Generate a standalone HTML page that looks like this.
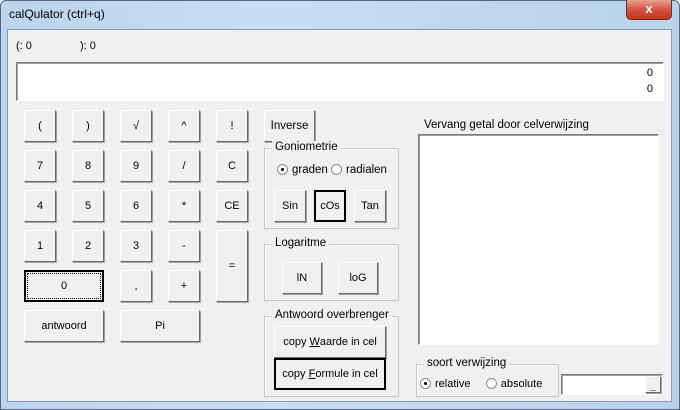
<!DOCTYPE html>
<html><head><meta charset="utf-8"><style>
*{box-sizing:border-box;margin:0;padding:0}
body{width:680px;height:410px;overflow:hidden;font-family:"Liberation Sans",sans-serif;font-size:11px;color:#000;background:#fff}
#win{position:absolute;left:0;top:0;width:680px;height:410px;background:linear-gradient(90deg,#bcd4ec,#c9def3 40%,#b9d1ea);border:1px solid #55687d;border-radius:6px 6px 0 0}
#title{position:absolute;left:9px;top:7px;font-size:12px}
#close{position:absolute;left:626px;top:0;width:46px;height:20px;border:1px solid #6b2a22;border-top:none;border-radius:0 0 5px 5px;background:linear-gradient(#e8a193,#d5553e 50%,#c2331c);color:#fff;font-weight:bold;font-size:13px;text-align:center;line-height:18px}
#client{position:absolute;left:7px;top:29px;width:665px;height:373px;background:#f0f0f0;border:1px solid #8a9bb0}
.a{position:absolute;white-space:nowrap}
.b{position:absolute;background:#f0f0f0;border:1px solid;border-color:#fff #696969 #696969 #fff;box-shadow:1px 1px 0 #a0a0a0;display:flex;align-items:center;justify-content:center;font-size:11px;white-space:nowrap}
.d{border:2px solid #000;box-shadow:none}
.g{position:absolute;border:1px solid #c8c8c8;box-shadow:inset 1px 1px 0 #fff}
.g>span{position:absolute;top:-8px;left:7px;background:#f0f0f0;padding:0 3px;font-size:11.5px;white-space:nowrap}
.w{position:absolute;background:#fff;border:1px solid;border-color:#7a7a7a #fff #fff #7a7a7a;box-shadow:inset 1px 1px 0 #a0a0a0}
.r{display:inline-block;width:11px;height:11px;border-radius:50%;border:1px solid #8a8a8a;background:#fff;vertical-align:-2px;position:relative;margin-right:4px}
.r.on::after{content:"";position:absolute;left:3px;top:3px;width:3px;height:3px;border-radius:50%;background:#000}
</style></head><body>
<div id="win"></div>
<div id="title">calQulator (ctrl+q)</div>
<div id="close">x</div>
<div id="client"></div>
<div class="a" style="left:16px;top:40px">(: 0</div>
<div class="a" style="left:80px;top:40px">): 0</div>
<div class="w" style="left:16px;top:62px;width:648px;height:39px"><div class="a" style="right:10px;top:4px">0</div><div class="a" style="right:10px;top:20px">0</div></div>

<div class="b" style="left:24px;top:110px;width:32px;height:32px">(</div>
<div class="b" style="left:72px;top:110px;width:32px;height:32px">)</div>
<div class="b" style="left:120px;top:110px;width:32px;height:32px">√</div>
<div class="b" style="left:168px;top:110px;width:32px;height:32px">^</div>
<div class="b" style="left:216px;top:110px;width:32px;height:32px">!</div>
<div class="b" style="left:24px;top:150px;width:32px;height:32px">7</div>
<div class="b" style="left:72px;top:150px;width:32px;height:32px">8</div>
<div class="b" style="left:120px;top:150px;width:32px;height:32px">9</div>
<div class="b" style="left:168px;top:150px;width:32px;height:32px">/</div>
<div class="b" style="left:216px;top:150px;width:32px;height:32px">C</div>
<div class="b" style="left:24px;top:190px;width:32px;height:32px">4</div>
<div class="b" style="left:72px;top:190px;width:32px;height:32px">5</div>
<div class="b" style="left:120px;top:190px;width:32px;height:32px">6</div>
<div class="b" style="left:168px;top:190px;width:32px;height:32px">*</div>
<div class="b" style="left:216px;top:190px;width:32px;height:32px">CE</div>
<div class="b" style="left:24px;top:230px;width:32px;height:32px">1</div>
<div class="b" style="left:72px;top:230px;width:32px;height:32px">2</div>
<div class="b" style="left:120px;top:230px;width:32px;height:32px">3</div>
<div class="b" style="left:168px;top:230px;width:32px;height:32px">-</div>
<div class="b" style="left:216px;top:230px;width:32px;height:72px">=</div>
<div class="b d" style="left:24px;top:270px;width:80px;height:32px"><span style="outline:1px dotted #000;width:72px;height:24px;display:flex;align-items:center;justify-content:center">0</span></div>
<div class="b" style="left:120px;top:270px;width:32px;height:32px">,</div>
<div class="b" style="left:168px;top:270px;width:32px;height:32px">+</div>
<div class="b" style="left:24px;top:310px;width:80px;height:32px">antwoord</div>
<div class="b" style="left:120px;top:310px;width:80px;height:32px">Pi</div>

<div class="b" style="left:264px;top:110px;width:51px;height:32px;font-size:11.5px">Inverse</div>
<div class="g" style="left:264px;top:148px;width:135px;height:81px"><span>Goniometrie</span></div>
<div class="a" style="left:277px;top:164px;font-size:11.5px"><i class="r on"></i>graden <i class="r"></i>radialen</div>
<div class="b" style="left:274px;top:190px;width:32px;height:32px">Sin</div>
<div class="b d" style="left:314px;top:190px;width:32px;height:32px">cOs</div>
<div class="b" style="left:354px;top:190px;width:32px;height:32px">Tan</div>
<div class="g" style="left:264px;top:244px;width:135px;height:57px"><span>Logaritme</span></div>
<div class="b" style="left:282px;top:262px;width:40px;height:32px">lN</div>
<div class="b" style="left:338px;top:262px;width:40px;height:32px">loG</div>
<div class="g" style="left:264px;top:316px;width:135px;height:81px"><span>Antwoord overbrenger</span></div>
<div class="b" style="left:274px;top:326px;width:112px;height:32px">copy&nbsp;<u>W</u>aarde in cel</div>
<div class="b d" style="left:274px;top:358px;width:112px;height:32px">copy&nbsp;<u>F</u>ormule in cel</div>

<div class="a" style="left:424px;top:119px;font-size:11.5px">Vervang getal door celverwijzing</div>
<div class="w" style="left:418px;top:134px;width:241px;height:211px"></div>
<div class="g" style="left:416px;top:364px;width:143px;height:33px"><span>soort verwijzing</span></div>
<div class="a" style="left:420px;top:378px"><i class="r on"></i>relative &nbsp;&nbsp;&nbsp; <i class="r"></i>absolute</div>
<div class="w" style="left:561px;top:374px;width:102px;height:21px"><div class="b" style="left:83px;top:1px;width:16px;height:17px;align-items:flex-end;font-weight:bold">_</div></div>
</body></html>
